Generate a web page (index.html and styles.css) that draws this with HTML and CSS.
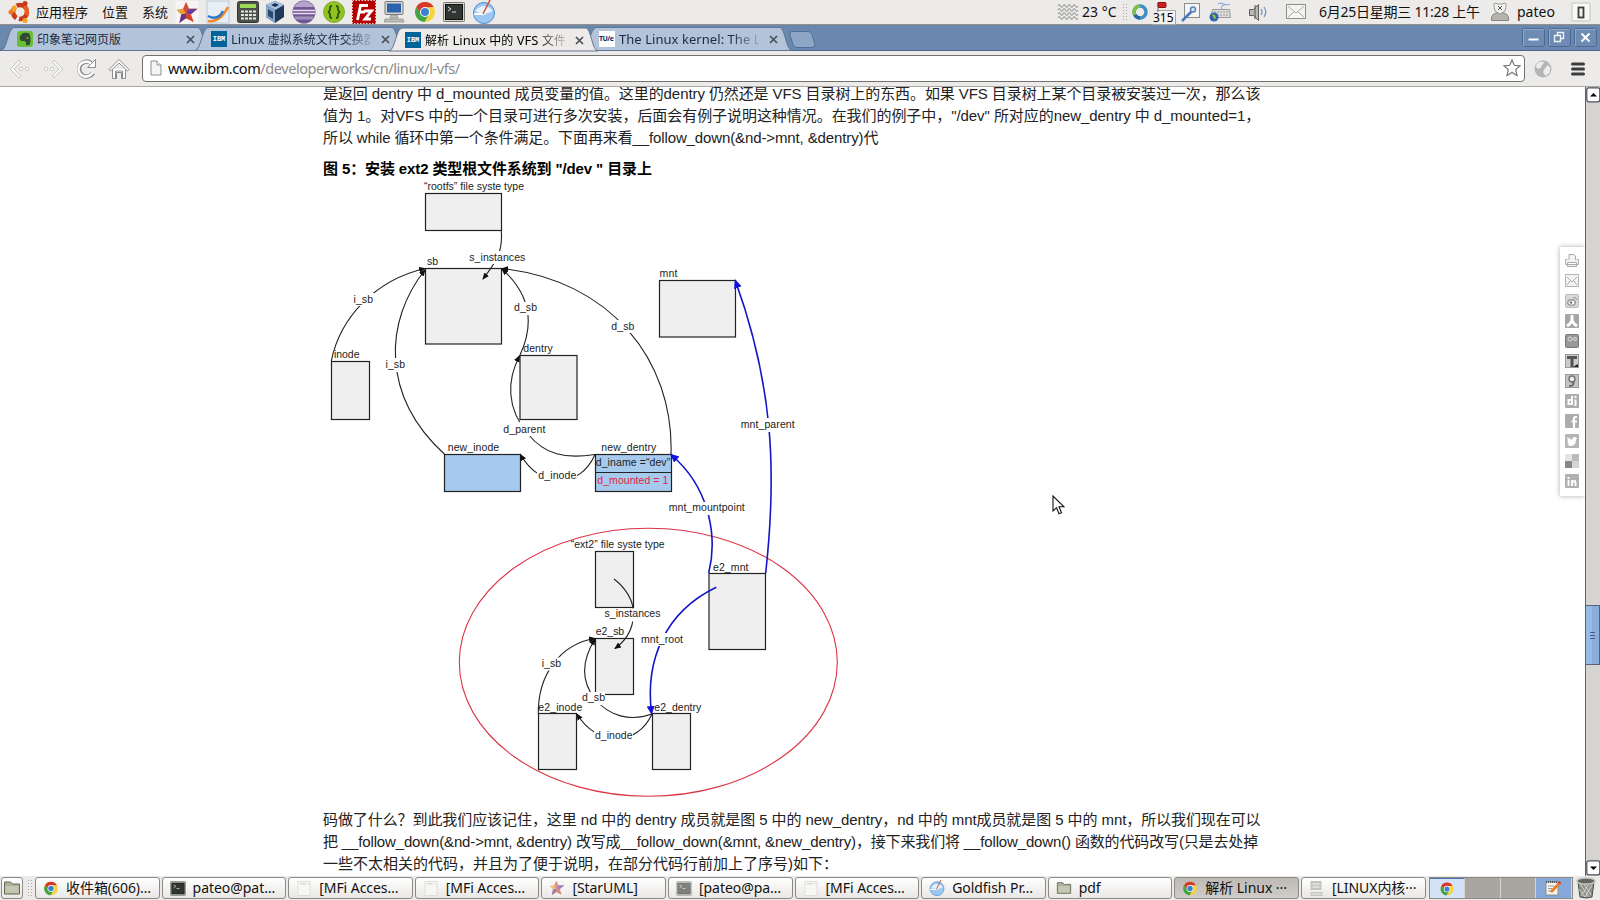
FILE: index.html
```html
<!DOCTYPE html>
<html lang="zh-CN">
<head>
<meta charset="utf-8">
<title>解析 Linux 中的 VFS 文件系统机制</title>
<link rel="stylesheet" href="styles.css">
</head>
<body>
<svg class="defs" width="0" height="0">
  <defs>
    <symbol id="chrome" viewBox="0 0 22 22">
      <circle cx="11" cy="11" r="10" fill="#f7d33b"/>
      <path d="M2.3 6A10 10 0 0 1 19.7 6L11 6.5 7 13Z" fill="#d9372a"/>
      <path d="M2.3 6A10 10 0 0 0 10.5 21L15 13 11 15 7 13Z" fill="#3fa548"/>
      <circle cx="11" cy="11" r="5" fill="#fff"/><circle cx="11" cy="11" r="4" fill="#3f7fd0"/>
    </symbol>
    <symbol id="terminal" viewBox="0 0 22 20">
      <rect x=".5" y=".5" width="21" height="19" rx="1" fill="#d5d5d0" stroke="#77776f"/>
      <rect x="2.500" y="2.500" width="17" height="15" fill="#303632" stroke="#111"/>
      <path d="M5 5l3 2-3 2M9 10h4" stroke="#ddd" fill="none"/>
    </symbol>
    <symbol id="star" viewBox="0 0 24 24">
      <rect width="24" height="24" fill="#f6f4f4"/>
      <path d="M11 1l3 7 9 0-7 6 3 8-8-4-7 5 2-9-5-5 7-1z" fill="#ec9b2d"/>
      <path d="M11 1l3 7-3 5-3-5z" fill="#d94838"/><path d="M14 8h9l-7 6-5-1z" fill="#6b3a9c"/><path d="M16 14l3 8-8-4v-5z" fill="#d8402f"/><path d="M4 23l2-9 5-1v5z" fill="#5e3592"/>
    </symbol>
    <symbol id="compass" viewBox="0 0 24 24">
      <circle cx="12" cy="13" r="10.500" fill="#9cc7f2" stroke="#4a8cd4"/>
      <path d="M3 11q9-10 18 0-9 5-18 0z" fill="#e5f2fd"/><path d="M2 14h8q3 1 5-4" stroke="#f7fbff" stroke-width="2" fill="none"/><path d="M18 0l-7 14" stroke="#d5532c" stroke-width="1.500"/>
    </symbol>
    <symbol id="folder" viewBox="0 0 18 18">
      <path d="M1.500 15V3h6l2 2h7v10z" fill="#aeb29a" stroke="#666b55"/><path d="M2.500 7h13v7h-13z" fill="#c4c8b2"/>
    </symbol>
    <symbol id="page" viewBox="0 0 16 18">
      <path d="M1.500 1.500h13v15h-13z" fill="#f6f6f4" stroke="#dddcd9"/><path d="M4 4h6M12 4h1" stroke="#c9c9c6"/>
    </symbol>
    <symbol id="tab" viewBox="0 0 210 25">
      <path d="M0 24.500C6 24 7 2 13 1.500H197C202 2 203 24 209 24.500Z"/>
    </symbol>
    <symbol id="close" viewBox="0 0 9 9"><path d="M1 1l7 7M8 1l-7 7" stroke="#4c5156" stroke-width="1.700"/></symbol>
  </defs>
</svg>

<header class="panel">
  <div class="panel-menus">
    <svg width="23" height="24" viewBox="0 0 23 24"><circle cx="12" cy="12" r="7" fill="none" stroke="#c63b1c" stroke-width="4.500" stroke-dasharray="12 2.660"/><path d="M5 12A7 7 0 0 1 8 6.500" stroke="#f4a61f" stroke-width="4.500" fill="none"/><path d="M16 6A7 7 0 0 1 18 15" stroke="#e95f20" stroke-width="4.500" fill="none"/><circle cx="3" cy="12" r="2.500" fill="#ee7b22"/><circle cx="17" cy="3.500" r="2.500" fill="#c63b1c"/><circle cx="17" cy="20.500" r="2.500" fill="#f4a61f"/></svg>
    <span class="m1">应用程序</span><span class="m2">位置</span><span class="m3">系统</span>
  </div>
  <div class="launchers">
    <svg width="24" height="23"><use href="#star"/></svg>
    <svg width="24" height="24" viewBox="0 0 24 24"><rect x="1" y="1" width="22" height="22" fill="#e6edf5" stroke="#b8c9dc"/><path d="M2 21q12 2 20-14" stroke="#ef8a24" stroke-width="2.500" fill="none"/><path d="M2 16q10 5 15-5" stroke="#2d77c8" stroke-width="2.500" fill="none"/></svg>
    <svg width="22" height="24" viewBox="0 0 22 24"><rect x=".5" y="1.500" width="21" height="21" rx="2" fill="#4d514c" stroke="#333"/><rect x="3" y="4" width="16" height="4" fill="#9ed85b"/><path d="M4 11.500h15M4 15h15M4 18.500h15" stroke="#e4e6e2" stroke-width="2" stroke-dasharray="3 1"/></svg>
    <svg width="20" height="24" viewBox="0 0 20 24"><path d="M10 1l9 4v12l-9 6-9-6V5z" fill="#203a5a"/><path d="M10 1l9 4-9 5-9-5z" fill="#a8c4e0"/><path d="M1 5l9 5v13l-9-6z" fill="#86a6c8"/><path d="M3 9l5 3v7l-5-3z" fill="#2c4a6e"/><path d="M6 5l4-2 4 2-4 2z" fill="#1d3553"/></svg>
    <svg width="24" height="24" viewBox="0 0 24 24"><circle cx="12" cy="12" r="11.500" fill="#735695"/><path d="M2 7a11.500 11.500 0 0 1 20 0z" fill="#b7a4cc"/><path d="M1 10.500h22M1 13.500h22" stroke="#e5def0" stroke-width="1.300"/><path d="M3 18h18" stroke="#a392bb" stroke-width="3"/></svg>
    <svg width="22" height="24" viewBox="0 0 22 24"><circle cx="11" cy="12" r="10.500" fill="#8fc31f" stroke="#86a93a"/><path d="M9 6q-2 0-2 2v2l-1.500 2L7 14v2q0 2 2 2M13 6q2 0 2 2v2l1.500 2-1.500 2v2q0 2-2 2" stroke="#35520a" stroke-width="1.800" fill="none"/></svg>
    <svg width="24" height="24" viewBox="0 0 24 24"><rect width="24" height="24" fill="#b40000"/><rect x=".5" y=".5" width="23" height="23" fill="none" stroke="#eedada" stroke-dasharray="1.500 1.500"/><path d="M5.500 20L8.500 5.500h7.500M7.500 12h5.500M12 11h7.500l-6.500 8h6" stroke="#fff" stroke-width="2.800" fill="none"/></svg>
    <svg width="22" height="24" viewBox="0 0 22 24"><rect x="2" y="1.500" width="18" height="13" rx="1" fill="#d6d7d2" stroke="#777"/><rect x="4" y="3.500" width="14" height="9" fill="#2d63ac"/><path d="M8 15h6l1 3H7zM2 19h18l1 3H1z" fill="#bfc0bb" stroke="#888" stroke-width=".7"/></svg>
    <svg width="22" height="24"><use href="#chrome"/></svg>
    <svg width="22" height="24"><use href="#terminal"/></svg>
    <svg width="24" height="24"><use href="#compass"/></svg>
  </div>
  <div class="tray">
    <svg class="t-wx" width="22" height="18" viewBox="0 0 22 18"><path d="M1 3q1.250-2.500 2.500 0t2.500 0 2.500 0 2.500 0 2.500 0 2.500 0 2.500 0 2.500 0M1 7q1.250-2.500 2.500 0t2.500 0 2.500 0 2.500 0 2.500 0 2.500 0 2.500 0 2.500 0M1 11q1.250-2.500 2.500 0t2.500 0 2.500 0 2.500 0 2.500 0 2.500 0 2.500 0 2.500 0M1 15q1.250-2.500 2.500 0t2.500 0 2.500 0 2.500 0 2.500 0 2.500 0 2.500 0 2.500 0" stroke="#a9a9a7" stroke-width="1.300" fill="none"/></svg>
    <span class="t-temp">23 °C</span>
    <span class="grip t-grip"></span>
    <svg class="t-ring" width="16" height="24" viewBox="0 0 16 24"><circle cx="8" cy="12" r="6" fill="none" stroke="#3f8fc6" stroke-width="3.500"/><path d="M8 6A6 6 0 0 0 3 15" stroke="#7cc142" stroke-width="3.500" fill="none"/><path d="M3 15A6 6 0 0 0 8 18" stroke="#2d62a3" stroke-width="3.500" fill="none"/></svg>
    <svg class="t-315" width="24" height="25" viewBox="0 0 24 25"><path d="M.5 24.500h23v-14H5" fill="#f3f2f0" stroke="#a9a6a2"/><path d="M6 2v10" stroke="#777"/><rect x="6" y="2.500" width="8" height="5" rx="1" fill="#c92222" stroke="#8d1010"/><text class="n315" x="1" y="22">315</text></svg>
    <svg class="t-key" width="19" height="24" viewBox="0 0 19 24"><rect x="3.500" y="3.500" width="15" height="14" fill="#f4f4f4" stroke="#8c8c8a"/><path d="M1 21L11 11" stroke="#4477bb" stroke-width="2.500"/><circle cx="12" cy="9.500" r="2.500" fill="#d9e6f6" stroke="#5a84bb" stroke-width="1.500"/></svg>
    <svg class="t-kbd" width="24" height="24" viewBox="0 0 24 24"><path d="M10 4q3-2 6 0t6 0M14 9q-2-4 3-4" stroke="#7aa3cf" fill="none"/><path d="M4.500 9.500h17l1 8H3z" fill="#ddddd9" stroke="#999"/><path d="M6 12h15M6 15h15" stroke="#999" stroke-dasharray="2 1"/><circle cx="6" cy="17" r="4.500" fill="#2d66ad"/><path d="M4 14l3 1 1 3-2 1z" fill="#a5bc3c"/></svg>
    <svg class="t-snd" width="20" height="24" viewBox="0 0 20 24"><path d="M1.500 9.500h4l5-5v16l-5-5h-4z" fill="#b9b9b5" stroke="#5d5d59"/><path d="M7 5v14" stroke="#555"/><path d="M13 9q2 3 0 6M16 7q3.500 5 0 10" stroke="#7198cb" stroke-width="1.300" fill="none"/></svg>
    <svg class="t-mail" width="21" height="24" viewBox="0 0 21 24"><rect x=".5" y="4.500" width="19" height="14" fill="#f5f5f3" stroke="#8e8e8a"/><path d="M2 6l8 7 8-7M2 17l6-5M18 17l-6-5" stroke="#aaa" fill="none"/></svg>
    <span class="t-date">6月25日星期三 11:28 上午</span>
    <svg class="t-user" width="20" height="24" viewBox="0 0 20 24"><path d="M1.500 20.500q-1-8 8.500-8t8.500 8z" fill="#b4b4ac" stroke="#888880"/><path d="M5 11q-2-8 0-8l3 1h4l3-1q2 0 0 8l-5 3z" fill="#f1f1ef" stroke="#999"/><path d="M8 6l4 4M12 6l-4 4" stroke="#555"/></svg>
    <span class="t-name">pateo</span>
    <svg class="t-sw" width="21" height="24" viewBox="0 0 21 24"><rect x="1" y="3" width="18" height="18" rx="1" fill="#f7f7f6" stroke="#c4c2bf"/><rect x="7.500" y="7.500" width="5" height="10" fill="#eee" stroke="#3c3c3a" stroke-width="1.800"/></svg>
  </div>
</header>

<nav class="tabs">
  <div class="tab"><svg class="shape" width="210" height="25"><use href="#tab"/></svg>
    <svg class="fav" width="16" height="16" viewBox="0 0 16 16"><rect width="16" height="16" rx="3" fill="#67bf35"/><path d="M3 5l3-3q6-1 7 2 1 5 0 9-1 2-4 1v-3l-2-1H4q-2-2-1-5z" fill="#364a33"/><circle cx="10.500" cy="7" r="1" fill="#67bf35"/></svg>
    <span class="title"><i>印象笔记网页版</i></span><svg class="x" width="9" height="9"><use href="#close"/></svg></div>
  <div class="tab"><svg class="shape" width="210" height="25"><use href="#tab"/></svg>
    <span class="fav ibm">IBM</span><span class="title fade">Linux <i>虚拟系统文件交换器</i></span><svg class="x" width="9" height="9"><use href="#close"/></svg></div>
  <div class="tab active"><svg class="shape" width="210" height="25"><use href="#tab"/></svg>
    <span class="fav ibm">IBM</span><span class="title fade"><i>解析</i> Linux <i>中的</i> VFS <i>文件</i></span><svg class="x" width="9" height="9"><use href="#close"/></svg></div>
  <div class="tab"><svg class="shape" width="210" height="25"><use href="#tab"/></svg>
    <span class="fav tue">TU/e</span><span class="title fade">The Linux kernel: The L</span><svg class="x" width="9" height="9"><use href="#close"/></svg></div>
  <svg class="newtab" width="27" height="17" viewBox="0 0 27 17"><path d="M3 .5h16q3 0 4 3l3 10q0 3-3 3H8q-3 0-4-3L.7 3Q.5.500 3 .5z" fill="#8ea5c5" stroke="#4d6e98"/></svg>
  <div class="winbtns">
    <svg width="23" height="20" viewBox="0 0 23 20"><rect x=".5" y=".5" width="22" height="18" rx="2" fill="#6e8cb3" stroke="#4b6a93"/><path d="M1.500 18V1.500h20" stroke="#91a9c8" fill="none"/><path d="M6.500 11.500h10" stroke="#fff" stroke-width="2"/></svg>
    <svg width="23" height="20" viewBox="0 0 23 20"><rect x=".5" y=".5" width="22" height="18" rx="2" fill="#6e8cb3" stroke="#4b6a93"/><path d="M1.500 18V1.500h20" stroke="#91a9c8" fill="none"/><path d="M6.500 7.500h6v6h-6zM9.500 7V4.500h6v6H13" stroke="#f1f5fa" stroke-width="1.300" fill="none"/></svg>
    <svg width="23" height="20" viewBox="0 0 23 20"><rect x=".5" y=".5" width="22" height="18" rx="2" fill="#6e8cb3" stroke="#4b6a93"/><path d="M1.500 18V1.500h20" stroke="#91a9c8" fill="none"/><path d="M7.500 5.500l8 8M15.500 5.500l-8 8" stroke="#fff" stroke-width="2"/></svg>
  </div>
</nav>

<div class="toolbar">
  <div class="navs">
    <svg width="22" height="22" viewBox="0 0 22 22"><path d="M10 2L1 11l9 9 2-2-7-7 7-7z" fill="#f4f4f3" stroke="#cbc9c7"/><circle cx="12" cy="11" r="1.700" fill="#fff" stroke="#cbc9c7"/><circle cx="18" cy="11" r="1.700" fill="#fff" stroke="#cbc9c7"/></svg>
    <svg width="22" height="22" viewBox="0 0 22 22"><path d="M12 2l9 9-9 9-2-2 7-7-7-7z" fill="#f4f4f3" stroke="#cbc9c7"/><circle cx="10" cy="11" r="1.700" fill="#fff" stroke="#cbc9c7"/><circle cx="4" cy="11" r="1.700" fill="#fff" stroke="#cbc9c7"/></svg>
    <svg width="22" height="22" viewBox="0 0 22 22"><path d="M18 15A7.500 7.500 0 1 1 16 5" stroke="#8d8c8a" stroke-width="4.500" fill="none"/><path d="M20.500 1.500v8h-8z" fill="#fff" stroke="#8d8c8a"/><path d="M17.700 14.500A7.500 7.500 0 1 1 16 5.500" stroke="#fff" stroke-width="2.500" fill="none"/></svg>
    <svg width="22" height="22" viewBox="0 0 22 22"><path d="M4.500 11v9.500h4v-6h5v6h4V11" fill="#fff" stroke="#8d8c8a"/><path d="M1 11.500L11 1.500l10 10-1.500 1.500L11 5 2.500 13z" fill="#fff" stroke="#8d8c8a"/><path d="M7.500 20v-7h7v7" fill="none" stroke="#8d8c8a"/></svg>
  </div>
  <div class="omnibox">
    <svg width="12" height="16" viewBox="0 0 12 16"><path d="M1 1h6l4 4v10H1z" fill="#f5f5f5" stroke="#8f8f8f"/><path d="M7 1v4h4" fill="#fff" stroke="#8f8f8f"/></svg>
    <span class="url"><b>www.ibm.com</b>/developerworks/cn/linux/l-vfs/</span>
    <svg width="18" height="18" viewBox="0 0 18 18"><path d="M9 1l2.300 5.300 5.700.5-4.300 3.800L14 16.500 9 13.500l-5 3 1.300-5.900L1 6.800l5.700-.5z" fill="#fff" stroke="#777" stroke-width="1.200"/></svg>
  </div>
  <svg class="globe" width="18" height="18" viewBox="0 0 18 18"><circle cx="9" cy="9" r="8.500" fill="#b5b5b5"/><path d="M2.500 4l4-2.500 4 1L8 5 7 7.500 4 9 2 7zM11 8l3-3 2.500 3-1 5-4 3-2.500-4z" fill="#ececec"/></svg>
  <svg class="menu" width="14" height="14" viewBox="0 0 14 14"><path d="M1.500 2h11M1.500 7h11M1.500 12h11" stroke="#3c3c3c" stroke-width="3" stroke-linecap="round"/></svg>
</div>

<div class="view">
  <main class="article">
    <p class="para p1"><span class="ln l1">是返回 dentry 中 d_mounted 成员变量的值。这里的dentry 仍然还是 VFS 目录树上的东西。如果 VFS 目录树上某个目录被安装过一次，那么该</span><span class="ln l2">值为 1。对VFS 中的一个目录可进行多次安装，后面会有例子说明这种情况。在我们的例子中，"/dev" 所对应的new_dentry 中 d_mounted=1，</span><span class="ln l3">所以 while 循环中第一个条件满足。下面再来看__follow_down(&amp;nd-&gt;mnt, &amp;dentry)代</span></p>
    <h3 class="caption">图 5：安装 ext2 类型根文件系统到 "/dev " 目录上</h3>
    <svg class="figure" width="560" height="620" viewBox="315 180 560 620">
      <defs>
        <marker id="ak" markerUnits="userSpaceOnUse" markerWidth="8" markerHeight="8" refX="6" refY="3" orient="auto"><path d="M0 0L7 3 0 6z" fill="#111"/></marker>
        <marker id="ab" markerUnits="userSpaceOnUse" markerWidth="10" markerHeight="10" refX="7" refY="4" orient="auto"><path d="M0 0L9 4 0 8z" fill="#1010e0"/></marker>
      </defs>
      <ellipse cx="648.300" cy="662.300" rx="189" ry="134" fill="none" stroke="#dc3545" stroke-width="1.100"/>
      <g class="box">
        <rect x="425.500" y="193.500" width="76" height="37"/><rect x="425.500" y="268.500" width="76" height="75.500"/>
        <rect x="659.500" y="280.500" width="76" height="56.500"/><rect x="331.500" y="361.500" width="38" height="58"/>
        <rect x="520" y="355.500" width="57" height="64"/>
        <rect class="blue" x="444.500" y="454.500" width="76" height="37"/><rect class="blue" x="595.500" y="454.500" width="76" height="37"/>
        <path d="M595.500 472.500h76"/>
        <rect x="595.500" y="551.500" width="38" height="56"/><rect x="595.500" y="638.500" width="38" height="56"/>
        <rect x="709" y="573.500" width="56.500" height="76"/><rect x="538.500" y="713.500" width="38" height="56"/><rect x="652.500" y="713.500" width="38" height="56"/>
      </g>
      <g class="wire">
        <path d="M501.300 230.700C503 252 496 262 483 279"/>
        <path d="M331.300 361C340 318 375 280 425 268.500"/>
        <path d="M444.300 454C380 395 385 320 425 270"/>
        <path d="M520 355C534 325 531 295 502 269"/>
        <path d="M671 454C674 360 610 280 502 268.500"/>
        <path d="M595 454.500C565 459 545 455 528 434C506 408 507 380 519.500 356"/>
        <path d="M595 454.500C580 489 540 489 520.500 454.500"/>
        <path d="M614 579C626 588 632 600 633 608C635 625 628 639 615 648.500"/>
        <path d="M538.300 713C538 675 560 644 595 638.500"/>
        <path d="M652 714C630 722 609 716 595 699C580 680 582 660 595 639"/>
        <path d="M652 714C637 747 597 747 577 714"/>
      </g>
      <g class="wire thick">
        <path d="M765.700 573C777 470 773 385 735.500 281"/>
        <path d="M708.700 573C717 540 712 490 671.500 455"/>
        <path d="M716.300 587.300C665 612 645 660 651.500 713"/>
      </g>
      <g fill="#fff">
        <path d="M468 251h58v13h-58zM352 293h22v13h-22zM512 302h26v13h-26zM610 320h25v13h-25zM384 358h22v14h-22zM502 422h44v14h-44zM537 472h40v11h-40zM739 418h56v14h-56zM667 502h79v13h-79zM603 608.500h58v13h-58zM640 633h43v13h-43zM541 657.500h21v13h-21zM581 692h24v13h-24zM594 731h39v12h-39z"/>
      </g>
      <g class="lbl">
        <text x="424" y="190" textLength="100">“rootfs” file syste type</text>
        <text x="427" y="265" textLength="11">sb</text>
        <text x="469.300" y="260.600" textLength="56">s_instances</text>
        <text x="353.500" y="302.700" textLength="19.500">i_sb</text>
        <text x="514" y="311.300" textLength="23">d_sb</text>
        <text x="611.300" y="329.700" textLength="23">d_sb</text>
        <text x="659.500" y="277" textLength="18">mnt</text>
        <text x="334" y="357.700" textLength="25.500">inode</text>
        <text x="385.500" y="367.700" textLength="19.500">i_sb</text>
        <text x="523.300" y="351.700" textLength="29.500">dentry</text>
        <text x="503.300" y="432.700" textLength="42">d_parent</text>
        <text x="447.700" y="450.700" textLength="51.500">new_inode</text>
        <text x="601.300" y="450.700" textLength="55">new_dentry</text>
        <text x="538.300" y="479" textLength="38">d_inode</text>
        <text x="595.700" y="466" textLength="74.500">d_iname =“dev”</text>
        <text class="red" x="597.300" y="483.700" textLength="71">d_mounted = 1</text>
        <text x="740.700" y="427.700" textLength="54">mnt_parent</text>
        <text x="668.700" y="511" textLength="76">mnt_mountpoint</text>
        <text x="570.700" y="547.700" textLength="94">“ext2” file syste type</text>
        <text x="713" y="570.700" textLength="35.500">e2_mnt</text>
        <text x="604.500" y="617" textLength="56">s_instances</text>
        <text x="595.700" y="635" textLength="28.500">e2_sb</text>
        <text x="641" y="642.700" textLength="42">mnt_root</text>
        <text x="541.700" y="667" textLength="19.500">i_sb</text>
        <text x="582" y="701.300" textLength="23">d_sb</text>
        <text x="538.300" y="710.700" textLength="44">e2_inode</text>
        <text x="654.300" y="710.700" textLength="47">e2_dentry</text>
        <text x="595" y="739.300" textLength="37.500">d_inode</text>
      </g>
    </svg>
    <p class="para p2"><span class="ln l4">码做了什么？到此我们应该记住，这里 nd 中的 dentry 成员就是图 5 中的 new_dentry，nd 中的 mnt成员就是图 5 中的 mnt，所以我们现在可以</span><span class="ln l5">把 __follow_down(&amp;nd-&gt;mnt, &amp;dentry) 改写成__follow_down(&amp;mnt, &amp;new_dentry)，接下来我们将 __follow_down() 函数的代码改写(只是去处掉</span><span class="ln l6">一些不太相关的代码，并且为了便于说明，在部分代码行前加上了序号)如下：</span></p>
  </main>
  <aside class="share">
    <svg viewBox="0 0 14 14"><path d="M4 6V.5h5l1.500 1.500V6M2.500 5.500H.5v5h13v-5h-2M2.500 8.500h9v4h-9z" fill="#f4f4f4" stroke="#aaa"/></svg>
    <svg viewBox="0 0 14 14"><rect x=".5" y=".5" width="13" height="12" fill="#f3f3f3" stroke="#b5b5b5"/><path d="M2 3l5 5 5-5M2 11l3-4M12 11L9 7" stroke="#aaa" fill="none"/></svg>
    <svg viewBox="0 0 14 14"><rect x=".5" y=".5" width="13" height="13" rx="1" fill="#d8d8d8" stroke="#bbb"/><ellipse cx="6.500" cy="8.500" rx="4.500" ry="3.500" fill="#999"/><ellipse cx="6.500" cy="8.500" rx="3" ry="2" fill="#fff"/><circle cx="6" cy="8.500" r="1.300" fill="#777"/><path d="M8 4q3-2 4 2" stroke="#999" fill="none"/></svg>
    <svg viewBox="0 0 14 14"><rect width="14" height="14" rx="1" fill="#a5a5a5"/><path d="M7 1v4q0 4-5 7M7 5q0 4 5 7" stroke="#fff" stroke-width="3" fill="none"/></svg>
    <svg viewBox="0 0 14 14"><rect x=".5" y=".5" width="13" height="13" rx="1" fill="#999" stroke="#777"/><circle cx="5" cy="5" r="2" fill="none" stroke="#ddd"/><circle cx="10" cy="5" r="1.500" fill="none" stroke="#ddd"/></svg>
    <svg viewBox="0 0 14 14"><rect x=".5" y=".5" width="13" height="13" fill="#ccc" stroke="#999"/><path d="M2 3.500h10M7 3v10" stroke="#555" stroke-width="3"/><path d="M8 13l5-3v3z" fill="#222"/></svg>
    <svg viewBox="0 0 14 14"><rect x=".5" y=".5" width="13" height="13" fill="#c5c5c5" stroke="#999"/><circle cx="7" cy="5" r="3" fill="#eee" stroke="#777" stroke-width="1.500"/><path d="M4 12q6 0 4-5" stroke="#666" stroke-width="2" fill="none"/></svg>
    <svg viewBox="0 0 14 14"><rect width="14" height="14" rx="1" fill="#adadad"/><path d="M7 2v9M6 6H3.500v4H7M10.500 5.500V12M10.500 2v2" stroke="#fff" stroke-width="2" fill="none"/></svg>
    <svg viewBox="0 0 14 14"><rect width="14" height="14" rx="1" fill="#adadad"/><path d="M12 3h-1.500Q9 3 9 5v9M6.500 7.500H12" stroke="#fff" stroke-width="2.200" fill="none"/></svg>
    <svg viewBox="0 0 14 14"><rect width="14" height="14" rx="1" fill="#b5b5b5"/><path d="M2 3l5 3q0-3 3-3l2 1-1 2q0 6-6 6l-3-1 2-1-2-2 1-1z" fill="#fff"/></svg>
    <svg viewBox="0 0 14 14"><rect width="14" height="14" fill="#e5e5e5"/><path d="M7 0h7v7H7z" fill="#bbb"/><path d="M0 7h7v7H0z" fill="#888"/><path d="M7 7h7v7H7z" fill="#d5d5d5"/></svg>
    <svg viewBox="0 0 14 14"><rect width="14" height="14" rx="1" fill="#b0b0b0"/><path d="M3.500 6v6M3.500 3v2M7 12V6M7 8.500q3.500-3 3.500 0V12" stroke="#fff" stroke-width="1.900" fill="none"/></svg>
  </aside>
  <div class="scroll">
    <svg class="sbtn" viewBox="0 0 15 16"><rect x=".8" y=".8" width="13" height="14" rx="2" fill="#fff" stroke="#4d525c" stroke-width="1.200"/><path d="M4 9.500h7L7.500 6z"/></svg>
    <div class="thumb"><i></i><i></i><i></i></div>
    <svg class="sbtn" viewBox="0 0 15 16"><rect x=".8" y=".8" width="13" height="14" rx="2" fill="#fff" stroke="#4d525c" stroke-width="1.200"/><path d="M4 6.500h7L7.500 10z"/></svg>
  </div>
</div>

<footer class="taskbar">
  <div class="task desk"><svg width="18" height="18"><use href="#folder"/></svg></div>
  <span class="grip"></span>
  <div class="task"><svg width="15" height="15"><use href="#chrome"/></svg><span>收件箱(606)…</span></div>
  <div class="task"><svg width="16" height="15"><use href="#terminal"/></svg><span>pateo@pat…</span></div>
  <div class="task"><svg width="15" height="17"><use href="#page"/></svg><span>[MFi Acces…</span></div>
  <div class="task"><svg width="15" height="17"><use href="#page"/></svg><span>[MFi Acces…</span></div>
  <div class="task"><svg class="dim" width="16" height="16"><use href="#star"/></svg><span>[StarUML]</span></div>
  <div class="task"><svg class="dim" width="16" height="15"><use href="#terminal"/></svg><span>[pateo@pa…</span></div>
  <div class="task"><svg width="15" height="17"><use href="#page"/></svg><span>[MFi Acces…</span></div>
  <div class="task"><svg width="16" height="16"><use href="#compass"/></svg><span>Goldfish Pr…</span></div>
  <div class="task"><svg width="16" height="16"><use href="#folder"/></svg><span>pdf</span></div>
  <div class="task on"><svg width="15" height="15"><use href="#chrome"/></svg><span>解析 Linux ···</span></div>
  <div class="task"><svg width="15" height="17" viewBox="0 0 15 17"><path d="M1 1h11v9H1zM1 12h12v4H1z" fill="#c4c4c2"/><path d="M3 4h7M3 7h7M2 14h10" stroke="#f4f4f4"/></svg><span>[LINUX内核···</span></div>
  <div class="pager">
    <div class="ws cur"><svg width="14" height="14"><use href="#chrome"/></svg></div><div class="ws"></div><div class="ws"></div>
    <div class="ws last"><svg width="16" height="16" viewBox="0 0 16 16"><rect x="1" y="2" width="12" height="13" fill="#f6f6f2" stroke="#8b8b80"/><path d="M1 2h12" stroke="#555" stroke-width="2" stroke-dasharray="1 1"/><path d="M3 6h6M3 8.500h4M3 11h3" stroke="#999"/><path d="M14.500 3L6 12" stroke="#e8822a" stroke-width="3"/><path d="M15.500 2L14 3.500" stroke="#d43c3c" stroke-width="3"/></svg></div>
  </div>
  <svg class="trash" width="20" height="22" viewBox="0 0 20 22"><path d="M2 5h16l-2 15q-6 2-12 0z" fill="#8d918a" stroke="#4d504a"/><path d="M4 7l9 13M8 7l7 11M13 7L5 19M16 8L9 20M3 12l6 8" stroke="#d9dbd6" stroke-width=".9"/><ellipse cx="10" cy="4" rx="9" ry="3" fill="#62665f" stroke="#c4c6c0" stroke-width="1.500"/></svg>
</footer>
<svg class="pointer" width="13" height="20" viewBox="0 0 13 20"><path d="M1 1v15l3.500-3.300 2.500 6 2.500-1-2.500-5.900h5z" fill="#fff" stroke="#111" stroke-width="1.100"/></svg>
</body>
</html>
```
FILE: styles.css
```css
* { box-sizing: border-box; }
body {
  margin: 0; width: 1600px; height: 900px; overflow: hidden; background: #fff;
  display: flex; flex-direction: column; position: relative;
  font-family: "Noto Sans", "Noto Sans CJK SC", sans-serif; font-size: 14px; color: #111;
}
svg { display: block; flex: none; }
.defs { position: absolute; }
.pointer { position: absolute; left: 1052px; top: 495px; }

.panel { height: 25px; flex: none; display: flex; align-items: center; background: #edebe9; border-bottom: 1px solid #958f87; white-space: nowrap; line-height: 24px; }
.panel-menus { display: flex; width: 175px; padding-left: 8px; font-size: 13px; }
.m1 { width: 66px; margin-left: 5px; }
.m2 { width: 40px; }
.launchers { width: 323px; display: flex; align-items: center; justify-content: space-between; padding-right: 2px; }
.launchers svg:nth-child(9) { margin-left: 3px; }
.tray { flex: 1; display: flex; align-items: center; font-size: 14px; }
.t-wx { margin-left: 559px; }
.t-temp { width: 40px; margin-left: 3px; }
.grip { width: 6px; height: 18px; flex: none; background-image: radial-gradient(circle, #aeaba7 0.8px, transparent 1px); background-size: 3px 3px; }
.t-ring { margin-left: 4px; }
.t-315 { margin-left: 4px; }
.n315 { font: 12px "Noto Sans", sans-serif; }
.t-key { margin-left: 5px; }
.t-kbd { margin-left: 8px; }
.t-snd { margin-left: 16px; }
.t-mail { margin-left: 18px; }
.t-date { margin-left: 12px; width: 171px; letter-spacing: -.25px; }
.t-name { margin-left: 7px; width: 54px; }

.tabs { height: 26px; flex: none; display: flex; align-items: stretch; background: #6a88ae; border-bottom: 1px solid #4b678e; padding: 1px 3px 0 1px; position: relative; }
.tab { position: relative; width: 194px; display: flex; align-items: center; padding: 2px 0 0 16px; color: #1c2b40; }
.tab.active { z-index: 2; color: #000; height: 26px; }
.tab > * { position: relative; }
.tab .shape { position: absolute; left: 0; top: 0; fill: #b3c3da; stroke: #5c7596; }
.tab.active .shape { fill: #edebe9; stroke: #66788f; height: 26px; }
.fav { width: 16px; height: 16px; flex: none; }
.ibm { background: #00639a; color: #fff; font: bold 7px/16px "Liberation Mono", monospace; text-align: center; }
.tue { background: #fff; color: #102a60; font: bold 7px/16px "Noto Sans", sans-serif; letter-spacing: -.5px; }
.title { margin-left: 4px; width: 140px; white-space: nowrap; font-size: 13px; line-height: 21px; letter-spacing: .05px; }
.title i { font-style: normal; font-size: 12px; letter-spacing: 0; }
.fade { -webkit-mask-image: linear-gradient(90deg, #000 80%, transparent 104%); mask-image: linear-gradient(90deg, #000 80%, transparent 104%); }
.x { margin-left: 10px; }
.newtab { margin: 5px 0 0 12px; }
.winbtns { display: flex; gap: 3px; margin: 2px 0 0 auto; }

.toolbar { height: 36px; flex: none; display: flex; align-items: center; background: #edebe9; border-bottom: 1px solid #a9a8a4; padding-left: 9px; }
.navs { display: flex; gap: 11px; width: 133px; }
.omnibox { width: 1383px; height: 27px; margin-top: -1px; border: 1px solid #72716f; border-radius: 4px; background: #fff; display: flex; align-items: center; padding: 0 3px 0 7px; }
.url { flex: 1; margin-left: 6px; font-size: 14.5px; letter-spacing: -.42px; line-height: 24px; color: #8a8a8a; white-space: nowrap; }
.url b { font-weight: 400; color: #111; }
.globe { margin-left: 9px; }
.menu { margin-left: 19px; }

.view { flex: 1; min-height: 0; display: flex; overflow: hidden; background: #fff; }
.article { width: 1560px; flex: none; padding-left: 323px; font-family: "Liberation Sans", "Noto Sans CJK SC", sans-serif; font-size: 15px; line-height: 22px; color: #222; }
.para { margin: 0; }
.p1 { margin-top: -4px; }
.ln { display: block; white-space: nowrap; }
.l1 { letter-spacing: -.085px; }
.l2 { letter-spacing: -.06px; }
.l3 { letter-spacing: -.12px; }
.l4 { letter-spacing: -.08px; }
.l5 { letter-spacing: -.147px; }
.caption { margin: 9px 0 0; font-size: 15px; line-height: 22px; height: 22px; color: #000; white-space: nowrap; letter-spacing: -.12px; }
.figure { margin: 0 0 0 -8px; }
.p2 { margin-top: 9px; }
.box { fill: #efefef; stroke: #222; stroke-width: 1.2; }
.box .blue { fill: #a6c9ee; }
.wire path { fill: none; stroke: #222; stroke-width: 1.1; marker-end: url(#ak); }
.wire.thick path { stroke: #1414c8; stroke-width: 1.6; marker-end: url(#ab); }
.lbl { font: 10.5px "Liberation Sans", sans-serif; fill: #222; }
.lbl .red { fill: #e0243c; }

.share { width: 25px; flex: none; height: 249px; margin-top: 160px; padding: 7px 0 0 5px; background: #fff; box-shadow: 0 0 5px #aaa; clip-path: inset(-6px 0 -6px -6px); display: flex; flex-direction: column; gap: 6px; }
.share svg { width: 14px; height: 14px; }
.scroll { width: 15px; flex: none; background: #d6d4d2; border-left: 1px solid #5b6170; display: flex; flex-direction: column; align-items: stretch; }
.sbtn { width: 15px; height: 16px; }
.thumb { height: 60px; margin-top: 502px; border: 1px solid #5b6170; border-left: 0; background: linear-gradient(90deg, #98bbe8 50%, #8aadda 50%); display: flex; flex-direction: column; align-items: center; justify-content: center; gap: 2px; }
.thumb i { width: 5px; height: 1px; background: #465f86; }
.scroll .sbtn:last-child { margin-top: auto; }

.taskbar { height: 24px; flex: none; display: flex; align-items: center; background: #edebe9; padding-left: 1px; }
.taskbar .grip { margin: 0 2px 0 2px; }
.task { width: 124.6px; height: 22px; margin-right: 2px; flex: none; display: flex; align-items: center; padding-left: 7px; border: 1px solid #8d8a86; border-radius: 3px; background: linear-gradient(#fff, #e9e7e5); white-space: nowrap; line-height: 20px; }
.task svg { width: 16px; }
.task span { margin-left: 7px; letter-spacing: -.05px; }
.task.on { background: linear-gradient(#bdbab6, #cfccc9); }
.desk { width: 22px; padding-left: 1px; }
.desk svg { width: 18px; }
.dim { opacity: .6; }
.pager { width: 144px; height: 22px; display: flex; border: 1px solid #8d8a86; margin-left: 1px; background: #a9a5a1; flex: none; }
.ws { flex: 1; display: flex; align-items: center; justify-content: center; border-right: 1px solid #d8d5d2; }
.cur { background: #d3e2f7; border-top: 1px solid #4a77b5; }
.last { background: #86a9d9; }
.trash { margin-left: 3px; }
```
